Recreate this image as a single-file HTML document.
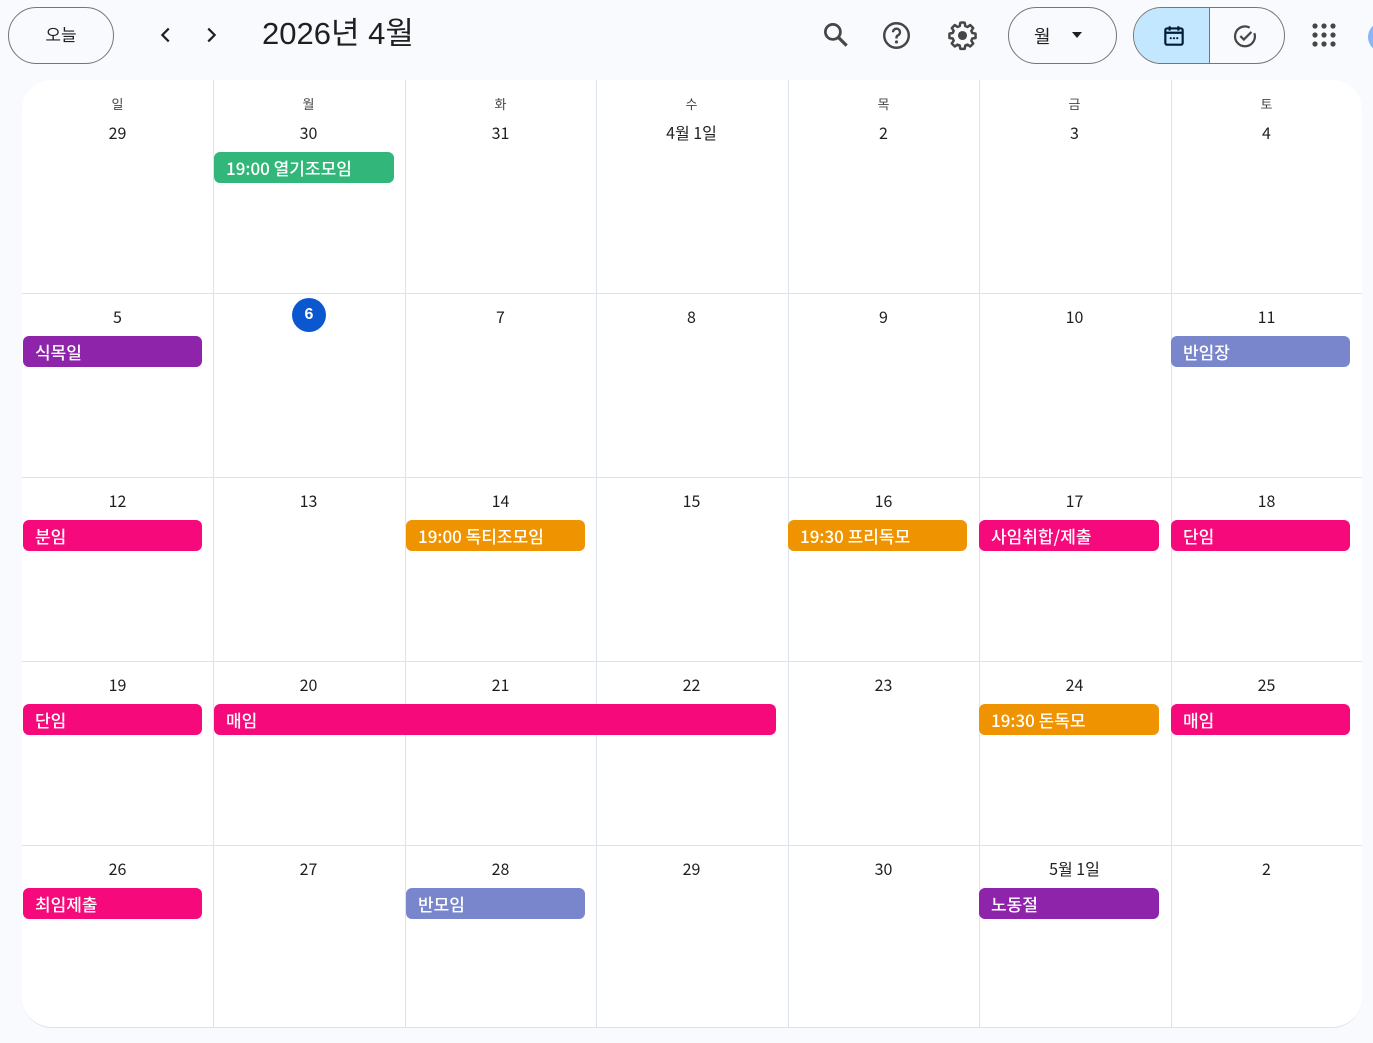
<!DOCTYPE html>
<html><head><meta charset="utf-8"><style>
*{box-sizing:border-box;margin:0;padding:0}
body{width:1373px;height:1043px;background:#f8fafd;font-family:"Liberation Sans","Noto Sans CJK KR",sans-serif;position:relative;overflow:hidden;color:#1f1f1f}
.a{position:absolute}
.grid{left:22px;top:80px;width:1340px;height:948px;background:#fff;border-radius:30px;overflow:hidden;border-bottom:1px solid #dde3ea}
.vl{position:absolute;top:0;bottom:0;width:1px;background:#dde3ea}
.hl{position:absolute;left:0;right:0;height:1px;background:#dde3ea}
.dn{position:absolute;width:191px;text-align:center;font-size:13px;color:#444746;line-height:18px}
.num{position:absolute;width:191px;text-align:center;font-size:16px;color:#1f1f1f;line-height:20px;font-family:"Noto Sans CJK KR",sans-serif}
.ev{position:absolute;height:31px;border-radius:6px;color:#fff;font-size:17px;font-weight:500;line-height:31px;padding-left:12px;white-space:nowrap;font-family:"Noto Sans CJK KR",sans-serif}
.pk{background:#f60a7b}.or{background:#f09300}.gr{background:#33b679}.pu{background:#8e24aa}.lv{background:#7986cb}
.btn{border:1px solid #747775;border-radius:30px}
</style></head><body>
<div class="a btn" style="left:8px;top:7px;width:106px;height:57px;text-align:center;line-height:55px;font-size:17px">오늘</div>
<svg class="a" style="left:155px;top:24px" width="22" height="22" viewBox="0 0 24 24"><path d="M15 5l-7 7 7 7" fill="none" stroke="#1f1f1f" stroke-width="2.4"/></svg>
<svg class="a" style="left:200px;top:24px" width="22" height="22" viewBox="0 0 24 24"><path d="M9 5l7 7-7 7" fill="none" stroke="#1f1f1f" stroke-width="2.4"/></svg>
<div class="a" style="left:262px;top:14px;font-size:31px;color:#1f1f1f;line-height:40px">2026년 4월</div>
<svg class="a" style="left:821px;top:20px" width="30" height="30" viewBox="0 0 24 24"><circle cx="9.5" cy="9.5" r="6" fill="none" stroke="#444746" stroke-width="2.2"/><path d="M14 14l6.5 6.5" stroke="#444746" stroke-width="2.6"/></svg>
<svg class="a" style="left:881px;top:20px" width="31" height="31" viewBox="0 0 24 24"><circle cx="12" cy="12" r="9.5" fill="none" stroke="#444746" stroke-width="1.9"/><path d="M9.3 9.5a2.7 2.7 0 1 1 3.8 2.4c-.8.4-1.1 1-1.1 1.9v.5" fill="none" stroke="#444746" stroke-width="1.9"/><circle cx="12" cy="17" r="1.2" fill="#444746"/></svg>
<svg class="a" style="left:946px;top:19px" width="33" height="33" viewBox="0 0 24 24"><path d="M12 2.5l1.6.2.4 2.4 1.6.7 2-1.4 2.2 2.2-1.4 2 .7 1.6 2.4.4v3.2l-2.4.4-.7 1.6 1.4 2-2.2 2.2-2-1.4-1.6.7-.4 2.4h-3.2l-.4-2.4-1.6-.7-2 1.4-2.2-2.2 1.4-2-.7-1.6-2.4-.4v-3.200l2.4-.4.7-1.6-1.4-2 2.2-2.2 2 1.4 1.6-.7.4-2.4z" fill="none" stroke="#444746" stroke-width="1.8" stroke-linejoin="round"/><circle cx="12" cy="12" r="3.3" fill="#444746"/></svg>
<div class="a btn" style="left:1008px;top:7px;width:109px;height:57px"><span class="a" style="left:25px;top:15px;font-size:18px">월</span><svg class="a" style="left:62px;top:22px" width="12" height="10"><path d="M1 2h10L6 8z" fill="#1f1f1f"/></svg></div>
<div class="a btn" style="left:1133px;top:7px;width:152px;height:57px;overflow:hidden"><div class="a" style="left:0;top:0;width:76px;height:57px;background:#c2e7ff;border-right:1px solid #747775"></div>
<svg class="a" style="left:27px;top:15px" width="26" height="26" viewBox="0 0 24 24"><rect x="4" y="5" width="16" height="15" rx="1.5" fill="none" stroke="#001d35" stroke-width="2"/><path d="M4 9h16M8 3v4M16 3v4" stroke="#001d35" stroke-width="2"/><circle cx="9" cy="14" r="1" fill="#001d35"/><circle cx="12" cy="14" r="1" fill="#001d35"/><circle cx="15" cy="14" r="1" fill="#001d35"/></svg>
<svg class="a" style="left:97px;top:14px" width="28" height="28" viewBox="0 0 24 24"><path d="M20 9.5A8.5 8.5 0 1 1 16 4.8" fill="none" stroke="#444746" stroke-width="1.9"/><path d="M8 12l3 3 6.5-6.5" fill="none" stroke="#444746" stroke-width="1.9"/></svg></div>
<svg class="a" style="left:1311px;top:22px" width="28" height="28" viewBox="0 0 28 28" fill="#444746"><circle cx="4" cy="4" r="2.6"/><circle cx="13" cy="4" r="2.6"/><circle cx="22" cy="4" r="2.6"/><circle cx="4" cy="13" r="2.6"/><circle cx="13" cy="13" r="2.6"/><circle cx="22" cy="13" r="2.6"/><circle cx="4" cy="22" r="2.6"/><circle cx="13" cy="22" r="2.6"/><circle cx="22" cy="22" r="2.6"/></svg>
<div class="a" style="left:1368px;top:22px;width:30px;height:30px;border-radius:50%;background:#8ab4f8"></div>

<div class="a grid">
<div class="vl" style="left:191px"></div><div class="vl" style="left:383px"></div><div class="vl" style="left:574px"></div><div class="vl" style="left:766px"></div><div class="vl" style="left:957px"></div><div class="vl" style="left:1149px"></div>
<div class="hl" style="top:213px"></div><div class="hl" style="top:397px"></div><div class="hl" style="top:581px"></div><div class="hl" style="top:765px"></div>
</div>
<div class="a" style="left:22px;top:0">
<div class="dn" style="left:0;top:96px">일</div><div class="dn" style="left:191px;top:96px">월</div><div class="dn" style="left:383px;top:96px">화</div><div class="dn" style="left:574px;top:96px">수</div><div class="dn" style="left:766px;top:96px">목</div><div class="dn" style="left:957px;top:96px">금</div><div class="dn" style="left:1149px;top:96px">토</div>
<div class="num" style="left:0;top:122px">29</div><div class="num" style="left:191px;top:122px">30</div><div class="num" style="left:383px;top:122px">31</div><div class="num" style="left:574px;top:122px">4월 1일</div><div class="num" style="left:766px;top:122px">2</div><div class="num" style="left:957px;top:122px">3</div><div class="num" style="left:1149px;top:122px">4</div>
<div class="num" style="left:0;top:306px">5</div><div class="a" style="left:270px;top:298px;width:34px;height:34px;border-radius:50%;background:#0b57d0;color:#fff;font-weight:bold;font-size:16px;text-align:center;line-height:34px">6</div><div class="num" style="left:383px;top:306px">7</div><div class="num" style="left:574px;top:306px">8</div><div class="num" style="left:766px;top:306px">9</div><div class="num" style="left:957px;top:306px">10</div><div class="num" style="left:1149px;top:306px">11</div>
<div class="num" style="left:0;top:490px">12</div><div class="num" style="left:191px;top:490px">13</div><div class="num" style="left:383px;top:490px">14</div><div class="num" style="left:574px;top:490px">15</div><div class="num" style="left:766px;top:490px">16</div><div class="num" style="left:957px;top:490px">17</div><div class="num" style="left:1149px;top:490px">18</div>
<div class="num" style="left:0;top:674px">19</div><div class="num" style="left:191px;top:674px">20</div><div class="num" style="left:383px;top:674px">21</div><div class="num" style="left:574px;top:674px">22</div><div class="num" style="left:766px;top:674px">23</div><div class="num" style="left:957px;top:674px">24</div><div class="num" style="left:1149px;top:674px">25</div>
<div class="num" style="left:0;top:858px">26</div><div class="num" style="left:191px;top:858px">27</div><div class="num" style="left:383px;top:858px">28</div><div class="num" style="left:574px;top:858px">29</div><div class="num" style="left:766px;top:858px">30</div><div class="num" style="left:957px;top:858px">5월 1일</div><div class="num" style="left:1149px;top:858px">2</div>
</div>
<div class="ev gr" style="left:214px;top:152px;width:180px">19:00 열기조모임</div>
<div class="ev pu" style="left:23px;top:336px;width:179px">식목일</div>
<div class="ev lv" style="left:1171px;top:336px;width:179px">반임장</div>
<div class="ev pk" style="left:23px;top:520px;width:179px">분임</div>
<div class="ev or" style="left:406px;top:520px;width:179px">19:00 독티조모임</div>
<div class="ev or" style="left:788px;top:520px;width:179px">19:30 프리독모</div>
<div class="ev pk" style="left:979px;top:520px;width:180px">사임취합/제출</div>
<div class="ev pk" style="left:1171px;top:520px;width:179px">단임</div>
<div class="ev pk" style="left:23px;top:704px;width:179px">단임</div>
<div class="ev pk" style="left:214px;top:704px;width:562px">매임</div>
<div class="ev or" style="left:979px;top:704px;width:180px">19:30 돈독모</div>
<div class="ev pk" style="left:1171px;top:704px;width:179px">매임</div>
<div class="ev pk" style="left:23px;top:888px;width:179px">최임제출</div>
<div class="ev lv" style="left:406px;top:888px;width:179px">반모임</div>
<div class="ev pu" style="left:979px;top:888px;width:180px">노동절</div>
</body></html>
